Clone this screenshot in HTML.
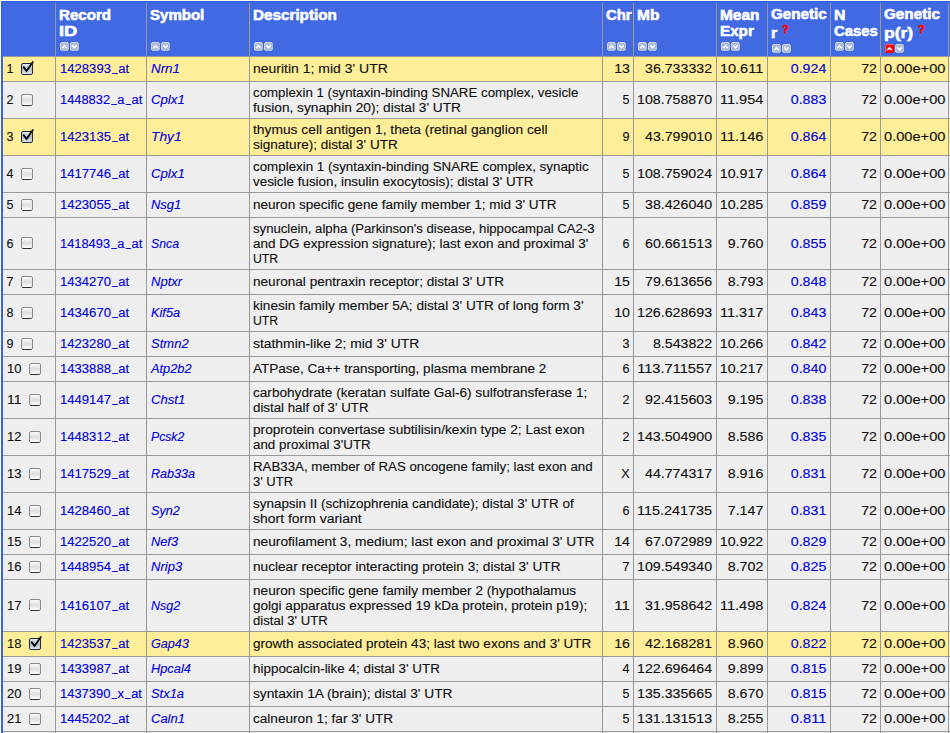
<!DOCTYPE html>
<html><head><meta charset="utf-8"><style>
html,body{margin:0;padding:0}
body{width:950px;height:733px;overflow:hidden;position:relative;background:#fdfcf0;font-family:"Liberation Sans",sans-serif}
.a{position:absolute}
.b{position:absolute;transform-origin:0 0;white-space:pre;font-size:12.5px;line-height:15px;color:#111;-webkit-text-stroke:0.12px currentColor}
.l{color:#0000dd}
.i{font-style:italic}
.u{display:inline-block;transform:translateY(-2.5px) scaleX(0.72)}
.h{position:absolute;transform-origin:0 0;white-space:pre;font-size:14px;font-weight:bold;line-height:16px;color:#fff;-webkit-text-stroke:0.55px #fff}
.q{position:absolute;font-size:11px;font-weight:bold;color:#f00;line-height:12px;-webkit-text-stroke:0.55px #f00;transform:scaleX(1.0);transform-origin:0 0}
</style></head><body>
<div class="a" style="left:1px;top:1px;width:949px;height:2px;background:#3a64e0"></div>
<div class="a" style="left:1px;top:1px;width:2px;height:732px;background:#3a64e0"></div>
<div class="a" style="left:3px;top:3px;width:947px;height:53px;background:#4169e1"></div>
<div class="a" style="left:3px;top:57px;width:947px;height:24px;background:#ffee99"></div>
<div class="a" style="left:3px;top:82px;width:947px;height:36px;background:#eeeeee"></div>
<div class="a" style="left:3px;top:119px;width:947px;height:36px;background:#ffee99"></div>
<div class="a" style="left:3px;top:156px;width:947px;height:36px;background:#eeeeee"></div>
<div class="a" style="left:3px;top:193px;width:947px;height:24px;background:#eeeeee"></div>
<div class="a" style="left:3px;top:218px;width:947px;height:51px;background:#eeeeee"></div>
<div class="a" style="left:3px;top:270px;width:947px;height:24px;background:#eeeeee"></div>
<div class="a" style="left:3px;top:295px;width:947px;height:36px;background:#eeeeee"></div>
<div class="a" style="left:3px;top:332px;width:947px;height:24px;background:#eeeeee"></div>
<div class="a" style="left:3px;top:357px;width:947px;height:24px;background:#eeeeee"></div>
<div class="a" style="left:3px;top:382px;width:947px;height:36px;background:#eeeeee"></div>
<div class="a" style="left:3px;top:419px;width:947px;height:36px;background:#eeeeee"></div>
<div class="a" style="left:3px;top:456px;width:947px;height:36px;background:#eeeeee"></div>
<div class="a" style="left:3px;top:493px;width:947px;height:36px;background:#eeeeee"></div>
<div class="a" style="left:3px;top:530px;width:947px;height:24px;background:#eeeeee"></div>
<div class="a" style="left:3px;top:555px;width:947px;height:24px;background:#eeeeee"></div>
<div class="a" style="left:3px;top:580px;width:947px;height:51px;background:#eeeeee"></div>
<div class="a" style="left:3px;top:632px;width:947px;height:24px;background:#ffee99"></div>
<div class="a" style="left:3px;top:657px;width:947px;height:24px;background:#eeeeee"></div>
<div class="a" style="left:3px;top:682px;width:947px;height:24px;background:#eeeeee"></div>
<div class="a" style="left:3px;top:707px;width:947px;height:24px;background:#eeeeee"></div>
<div class="a" style="left:3px;top:732px;width:947px;height:1px;background:#eeeeee"></div>
<div class="a" style="left:3px;top:56px;width:947px;height:1px;background:#999999"></div>
<div class="a" style="left:3px;top:81px;width:947px;height:1px;background:#999999"></div>
<div class="a" style="left:3px;top:118px;width:947px;height:1px;background:#999999"></div>
<div class="a" style="left:3px;top:155px;width:947px;height:1px;background:#999999"></div>
<div class="a" style="left:3px;top:192px;width:947px;height:1px;background:#999999"></div>
<div class="a" style="left:3px;top:217px;width:947px;height:1px;background:#999999"></div>
<div class="a" style="left:3px;top:269px;width:947px;height:1px;background:#999999"></div>
<div class="a" style="left:3px;top:294px;width:947px;height:1px;background:#999999"></div>
<div class="a" style="left:3px;top:331px;width:947px;height:1px;background:#999999"></div>
<div class="a" style="left:3px;top:356px;width:947px;height:1px;background:#999999"></div>
<div class="a" style="left:3px;top:381px;width:947px;height:1px;background:#999999"></div>
<div class="a" style="left:3px;top:418px;width:947px;height:1px;background:#999999"></div>
<div class="a" style="left:3px;top:455px;width:947px;height:1px;background:#999999"></div>
<div class="a" style="left:3px;top:492px;width:947px;height:1px;background:#999999"></div>
<div class="a" style="left:3px;top:529px;width:947px;height:1px;background:#999999"></div>
<div class="a" style="left:3px;top:554px;width:947px;height:1px;background:#999999"></div>
<div class="a" style="left:3px;top:579px;width:947px;height:1px;background:#999999"></div>
<div class="a" style="left:3px;top:631px;width:947px;height:1px;background:#999999"></div>
<div class="a" style="left:3px;top:656px;width:947px;height:1px;background:#999999"></div>
<div class="a" style="left:3px;top:681px;width:947px;height:1px;background:#999999"></div>
<div class="a" style="left:3px;top:706px;width:947px;height:1px;background:#999999"></div>
<div class="a" style="left:3px;top:731px;width:947px;height:1px;background:#999999"></div>
<div class="a" style="left:55px;top:3px;width:1px;height:730px;background:#999999"></div>
<div class="a" style="left:146px;top:3px;width:1px;height:730px;background:#999999"></div>
<div class="a" style="left:249px;top:3px;width:1px;height:730px;background:#999999"></div>
<div class="a" style="left:602px;top:3px;width:1px;height:730px;background:#999999"></div>
<div class="a" style="left:633px;top:3px;width:1px;height:730px;background:#999999"></div>
<div class="a" style="left:716px;top:3px;width:1px;height:730px;background:#999999"></div>
<div class="a" style="left:767px;top:3px;width:1px;height:730px;background:#999999"></div>
<div class="a" style="left:830px;top:3px;width:1px;height:730px;background:#999999"></div>
<div class="a" style="left:880px;top:3px;width:1px;height:730px;background:#999999"></div>
<div class="a" style="left:948px;top:3px;width:1px;height:730px;background:#999999"></div>
<div class="h" style="left:59px;top:7px;transform:scaleX(1.0788)">Record</div>
<div class="h" style="left:59px;top:23px;transform:scaleX(1.3092)">ID</div>
<svg class="a" style="left:60px;top:42px" width="19" height="9" viewBox="0 0 19 9"><path d="M1 0h7v1h1v7h-1v1h-7v-1h-1v-7h1z" fill="#aebbd9"/><path d="M11 0h7v1h1v7h-1v1h-7v-1h-1v-7h1z" fill="#aebbd9"/><path d="M1 0h7v1h-7zM0 1h1v7h-1zM11 0h7v1h-7zM10 1h1v7h-1z" fill="#fff" fill-opacity="0.35"/><path d="M2.2 6.3L4.5 3.8L6.8 6.3" stroke="#fff" stroke-width="1.4" fill="none"/><path d="M12.2 3.3L14.5 5.8L16.8 3.3" stroke="#fff" stroke-width="1.4" fill="none"/></svg>
<div class="h" style="left:150px;top:7px;transform:scaleX(1.0738)">Symbol</div>
<svg class="a" style="left:151px;top:42px" width="19" height="9" viewBox="0 0 19 9"><path d="M1 0h7v1h1v7h-1v1h-7v-1h-1v-7h1z" fill="#aebbd9"/><path d="M11 0h7v1h1v7h-1v1h-7v-1h-1v-7h1z" fill="#aebbd9"/><path d="M1 0h7v1h-7zM0 1h1v7h-1zM11 0h7v1h-7zM10 1h1v7h-1z" fill="#fff" fill-opacity="0.35"/><path d="M2.2 6.3L4.5 3.8L6.8 6.3" stroke="#fff" stroke-width="1.4" fill="none"/><path d="M12.2 3.3L14.5 5.8L16.8 3.3" stroke="#fff" stroke-width="1.4" fill="none"/></svg>
<div class="h" style="left:253px;top:7px;transform:scaleX(1.0892)">Description</div>
<svg class="a" style="left:254px;top:42px" width="19" height="9" viewBox="0 0 19 9"><path d="M1 0h7v1h1v7h-1v1h-7v-1h-1v-7h1z" fill="#aebbd9"/><path d="M11 0h7v1h1v7h-1v1h-7v-1h-1v-7h1z" fill="#aebbd9"/><path d="M1 0h7v1h-7zM0 1h1v7h-1zM11 0h7v1h-7zM10 1h1v7h-1z" fill="#fff" fill-opacity="0.35"/><path d="M2.2 6.3L4.5 3.8L6.8 6.3" stroke="#fff" stroke-width="1.4" fill="none"/><path d="M12.2 3.3L14.5 5.8L16.8 3.3" stroke="#fff" stroke-width="1.4" fill="none"/></svg>
<div class="h" style="left:606px;top:7px;transform:scaleX(1.0632)">Chr</div>
<svg class="a" style="left:607px;top:42px" width="19" height="9" viewBox="0 0 19 9"><path d="M1 0h7v1h1v7h-1v1h-7v-1h-1v-7h1z" fill="#aebbd9"/><path d="M11 0h7v1h1v7h-1v1h-7v-1h-1v-7h1z" fill="#aebbd9"/><path d="M1 0h7v1h-7zM0 1h1v7h-1zM11 0h7v1h-7zM10 1h1v7h-1z" fill="#fff" fill-opacity="0.35"/><path d="M2.2 6.3L4.5 3.8L6.8 6.3" stroke="#fff" stroke-width="1.4" fill="none"/><path d="M12.2 3.3L14.5 5.8L16.8 3.3" stroke="#fff" stroke-width="1.4" fill="none"/></svg>
<div class="h" style="left:637px;top:7px;transform:scaleX(1.1045)">Mb</div>
<svg class="a" style="left:638px;top:42px" width="19" height="9" viewBox="0 0 19 9"><path d="M1 0h7v1h1v7h-1v1h-7v-1h-1v-7h1z" fill="#aebbd9"/><path d="M11 0h7v1h1v7h-1v1h-7v-1h-1v-7h1z" fill="#aebbd9"/><path d="M1 0h7v1h-7zM0 1h1v7h-1zM11 0h7v1h-7zM10 1h1v7h-1z" fill="#fff" fill-opacity="0.35"/><path d="M2.2 6.3L4.5 3.8L6.8 6.3" stroke="#fff" stroke-width="1.4" fill="none"/><path d="M12.2 3.3L14.5 5.8L16.8 3.3" stroke="#fff" stroke-width="1.4" fill="none"/></svg>
<div class="h" style="left:720px;top:7px;transform:scaleX(1.0991)">Mean</div>
<div class="h" style="left:720px;top:23px;transform:scaleX(1.0871)">Expr</div>
<svg class="a" style="left:721px;top:42px" width="19" height="9" viewBox="0 0 19 9"><path d="M1 0h7v1h1v7h-1v1h-7v-1h-1v-7h1z" fill="#aebbd9"/><path d="M11 0h7v1h1v7h-1v1h-7v-1h-1v-7h1z" fill="#aebbd9"/><path d="M1 0h7v1h-7zM0 1h1v7h-1zM11 0h7v1h-7zM10 1h1v7h-1z" fill="#fff" fill-opacity="0.35"/><path d="M2.2 6.3L4.5 3.8L6.8 6.3" stroke="#fff" stroke-width="1.4" fill="none"/><path d="M12.2 3.3L14.5 5.8L16.8 3.3" stroke="#fff" stroke-width="1.4" fill="none"/></svg>
<div class="h" style="left:771px;top:6px;transform:scaleX(1.0826)">Genetic</div>
<div class="h" style="left:771px;top:25px;transform:scaleX(1.1276)">r</div>
<svg class="a" style="left:772px;top:44px" width="19" height="9" viewBox="0 0 19 9"><path d="M1 0h7v1h1v7h-1v1h-7v-1h-1v-7h1z" fill="#aebbd9"/><path d="M11 0h7v1h1v7h-1v1h-7v-1h-1v-7h1z" fill="#aebbd9"/><path d="M1 0h7v1h-7zM0 1h1v7h-1zM11 0h7v1h-7zM10 1h1v7h-1z" fill="#fff" fill-opacity="0.35"/><path d="M2.2 6.3L4.5 3.8L6.8 6.3" stroke="#fff" stroke-width="1.4" fill="none"/><path d="M12.2 3.3L14.5 5.8L16.8 3.3" stroke="#fff" stroke-width="1.4" fill="none"/></svg>
<div class="h" style="left:834px;top:7px;transform:scaleX(1.1318)">N</div>
<div class="h" style="left:834px;top:23px;transform:scaleX(1.0585)">Cases</div>
<svg class="a" style="left:835px;top:42px" width="19" height="9" viewBox="0 0 19 9"><path d="M1 0h7v1h1v7h-1v1h-7v-1h-1v-7h1z" fill="#aebbd9"/><path d="M11 0h7v1h1v7h-1v1h-7v-1h-1v-7h1z" fill="#aebbd9"/><path d="M1 0h7v1h-7zM0 1h1v7h-1zM11 0h7v1h-7zM10 1h1v7h-1z" fill="#fff" fill-opacity="0.35"/><path d="M2.2 6.3L4.5 3.8L6.8 6.3" stroke="#fff" stroke-width="1.4" fill="none"/><path d="M12.2 3.3L14.5 5.8L16.8 3.3" stroke="#fff" stroke-width="1.4" fill="none"/></svg>
<div class="h" style="left:884px;top:6px;transform:scaleX(1.0897)">Genetic</div>
<div class="h" style="left:884px;top:25px;transform:scaleX(1.2523)">p(r)</div>
<svg class="a" style="left:885px;top:44px" width="19" height="9" viewBox="0 0 19 9"><path d="M1 0h7v1h1v7h-1v1h-7v-1h-1v-7h1z" fill="#ff0000"/><path d="M11 0h7v1h1v7h-1v1h-7v-1h-1v-7h1z" fill="#aebbd9"/><path d="M1 0h7v1h-7zM0 1h1v7h-1zM11 0h7v1h-7zM10 1h1v7h-1z" fill="#fff" fill-opacity="0.35"/><path d="M2.2 6.3L4.5 3.8L6.8 6.3" stroke="#fff" stroke-width="1.4" fill="none"/><path d="M12.2 3.3L14.5 5.8L16.8 3.3" stroke="#fff" stroke-width="1.4" fill="none"/></svg>
<div class="q" style="left:782px;top:22.5px">?</div>
<div class="q" style="left:918px;top:22.5px">?</div>
<svg width="0" height="0" style="position:absolute"><defs><linearGradient id="gc" x1="0" y1="0" x2="0" y2="1"><stop offset="0" stop-color="#e6edf4"/><stop offset="0.5" stop-color="#aebdcc"/><stop offset="1" stop-color="#e2eaf2"/></linearGradient><linearGradient id="gu" x1="0" y1="0" x2="0" y2="1"><stop offset="0" stop-color="#ffffff"/><stop offset="0.5" stop-color="#dcdcdc"/><stop offset="1" stop-color="#ffffff"/></linearGradient></defs></svg>
<div class="b" style="left:6.5px;top:62px">1</div>
<svg class="a" style="left:21px;top:61px" width="14" height="14" viewBox="0 0 14 14"><rect x="0.5" y="2.5" width="11" height="11" rx="1.5" fill="url(#gc)" stroke="#1e2b40"/><path d="M2.2 5.6L5.6 10L12.2 0.5" stroke="#000" stroke-width="1.8" fill="none"/></svg>
<div class="b l" style="left:60px;top:62px;transform:scaleX(1.0473)">1428393<span class="u">_</span>at</div>
<div class="b l i" style="left:151px;top:62px;transform:scaleX(1.0705)">Nrn1</div>
<div class="b" style="left:253px;top:62px;transform:scaleX(1.1194)">neuritin 1; mid 3' UTR</div>
<div class="b" style="right:320.5px;top:62px;transform:scaleX(1.1327);transform-origin:100% 0">13</div>
<div class="b" style="right:237.5px;top:62px;transform:scaleX(1.1357);transform-origin:100% 0">36.733332</div>
<div class="b" style="right:186.5px;top:62px;transform:scaleX(1.1634);transform-origin:100% 0">10.611</div>
<div class="b l" style="right:123.5px;top:62px;transform:scaleX(1.1349);transform-origin:100% 0">0.924</div>
<div class="b" style="right:73.5px;top:62px;transform:scaleX(1.1327);transform-origin:100% 0">72</div>
<div class="b" style="left:884px;top:62px;transform:scaleX(1.1708)">0.00e+00</div>
<div class="b" style="left:6.5px;top:93px">2</div>
<svg class="a" style="left:21px;top:94px" width="12" height="12" viewBox="0 0 12 12"><rect x="0.5" y="0.5" width="11" height="11" rx="1.5" fill="url(#gu)" stroke="#8a8a8a"/><path d="M1.5 11.5h9" stroke="#333" stroke-width="1"/></svg>
<div class="b l" style="left:60px;top:93px;transform:scaleX(1.0281)">1448832<span class="u">_</span>a<span class="u">_</span>at</div>
<div class="b l i" style="left:151px;top:93px;transform:scaleX(1.0548)">Cplx1</div>
<div class="b" style="left:253px;top:85.5px;transform:scaleX(1.0620)">complexin 1 (syntaxin-binding SNARE complex, vesicle</div>
<div class="b" style="left:253px;top:100.5px;transform:scaleX(1.0944)">fusion, synaphin 20); distal 3' UTR</div>
<div class="b" style="right:320.5px;top:93px">5</div>
<div class="b" style="right:237.5px;top:93px;transform:scaleX(1.1358);transform-origin:100% 0">108.758870</div>
<div class="b" style="right:186.5px;top:93px;transform:scaleX(1.1634);transform-origin:100% 0">11.954</div>
<div class="b l" style="right:123.5px;top:93px;transform:scaleX(1.1349);transform-origin:100% 0">0.883</div>
<div class="b" style="right:73.5px;top:93px;transform:scaleX(1.1327);transform-origin:100% 0">72</div>
<div class="b" style="left:884px;top:93px;transform:scaleX(1.1708)">0.00e+00</div>
<div class="b" style="left:6.5px;top:130px">3</div>
<svg class="a" style="left:21px;top:129px" width="14" height="14" viewBox="0 0 14 14"><rect x="0.5" y="2.5" width="11" height="11" rx="1.5" fill="url(#gc)" stroke="#1e2b40"/><path d="M2.2 5.6L5.6 10L12.2 0.5" stroke="#000" stroke-width="1.8" fill="none"/></svg>
<div class="b l" style="left:60px;top:130px;transform:scaleX(1.0473)">1423135<span class="u">_</span>at</div>
<div class="b l i" style="left:151px;top:130px;transform:scaleX(1.1025)">Thy1</div>
<div class="b" style="left:253px;top:122.5px;transform:scaleX(1.1042)">thymus cell antigen 1, theta (retinal ganglion cell</div>
<div class="b" style="left:253px;top:137.5px;transform:scaleX(1.0830)">signature); distal 3' UTR</div>
<div class="b" style="right:320.5px;top:130px">9</div>
<div class="b" style="right:237.5px;top:130px;transform:scaleX(1.1357);transform-origin:100% 0">43.799010</div>
<div class="b" style="right:186.5px;top:130px;transform:scaleX(1.1634);transform-origin:100% 0">11.146</div>
<div class="b l" style="right:123.5px;top:130px;transform:scaleX(1.1349);transform-origin:100% 0">0.864</div>
<div class="b" style="right:73.5px;top:130px;transform:scaleX(1.1327);transform-origin:100% 0">72</div>
<div class="b" style="left:884px;top:130px;transform:scaleX(1.1708)">0.00e+00</div>
<div class="b" style="left:6.5px;top:167px">4</div>
<svg class="a" style="left:21px;top:168px" width="12" height="12" viewBox="0 0 12 12"><rect x="0.5" y="0.5" width="11" height="11" rx="1.5" fill="url(#gu)" stroke="#8a8a8a"/><path d="M1.5 11.5h9" stroke="#333" stroke-width="1"/></svg>
<div class="b l" style="left:60px;top:167px;transform:scaleX(1.0473)">1417746<span class="u">_</span>at</div>
<div class="b l i" style="left:151px;top:167px;transform:scaleX(1.0548)">Cplx1</div>
<div class="b" style="left:253px;top:159.5px;transform:scaleX(1.0688)">complexin 1 (syntaxin-binding SNARE complex, synaptic</div>
<div class="b" style="left:253px;top:174.5px;transform:scaleX(1.0725)">vesicle fusion, insulin exocytosis); distal 3' UTR</div>
<div class="b" style="right:320.5px;top:167px">5</div>
<div class="b" style="right:237.5px;top:167px;transform:scaleX(1.1358);transform-origin:100% 0">108.759024</div>
<div class="b" style="right:186.5px;top:167px;transform:scaleX(1.1352);transform-origin:100% 0">10.917</div>
<div class="b l" style="right:123.5px;top:167px;transform:scaleX(1.1349);transform-origin:100% 0">0.864</div>
<div class="b" style="right:73.5px;top:167px;transform:scaleX(1.1327);transform-origin:100% 0">72</div>
<div class="b" style="left:884px;top:167px;transform:scaleX(1.1708)">0.00e+00</div>
<div class="b" style="left:6.5px;top:198px">5</div>
<svg class="a" style="left:21px;top:199px" width="12" height="12" viewBox="0 0 12 12"><rect x="0.5" y="0.5" width="11" height="11" rx="1.5" fill="url(#gu)" stroke="#8a8a8a"/><path d="M1.5 11.5h9" stroke="#333" stroke-width="1"/></svg>
<div class="b l" style="left:60px;top:198px;transform:scaleX(1.0473)">1423055<span class="u">_</span>at</div>
<div class="b l i" style="left:151px;top:198px;transform:scaleX(1.0366)">Nsg1</div>
<div class="b" style="left:253px;top:198px;transform:scaleX(1.0832)">neuron specific gene family member 1; mid 3' UTR</div>
<div class="b" style="right:320.5px;top:198px">5</div>
<div class="b" style="right:237.5px;top:198px;transform:scaleX(1.1357);transform-origin:100% 0">38.426040</div>
<div class="b" style="right:186.5px;top:198px;transform:scaleX(1.1352);transform-origin:100% 0">10.285</div>
<div class="b l" style="right:123.5px;top:198px;transform:scaleX(1.1349);transform-origin:100% 0">0.859</div>
<div class="b" style="right:73.5px;top:198px;transform:scaleX(1.1327);transform-origin:100% 0">72</div>
<div class="b" style="left:884px;top:198px;transform:scaleX(1.1708)">0.00e+00</div>
<div class="b" style="left:6.5px;top:236.5px">6</div>
<svg class="a" style="left:21px;top:237px" width="12" height="12" viewBox="0 0 12 12"><rect x="0.5" y="0.5" width="11" height="11" rx="1.5" fill="url(#gu)" stroke="#8a8a8a"/><path d="M1.5 11.5h9" stroke="#333" stroke-width="1"/></svg>
<div class="b l" style="left:60px;top:236.5px;transform:scaleX(1.0281)">1418493<span class="u">_</span>a<span class="u">_</span>at</div>
<div class="b l i" style="left:151px;top:236.5px;transform:scaleX(0.9813)">Snca</div>
<div class="b" style="left:253px;top:221.5px;transform:scaleX(1.0515)">synuclein, alpha (Parkinson's disease, hippocampal CA2-3</div>
<div class="b" style="left:253px;top:236.5px;transform:scaleX(1.0783)">and DG expression signature); last exon and proximal 3'</div>
<div class="b" style="left:253px;top:251.5px;transform:scaleX(0.9816)">UTR</div>
<div class="b" style="right:320.5px;top:236.5px">6</div>
<div class="b" style="right:237.5px;top:236.5px;transform:scaleX(1.1357);transform-origin:100% 0">60.661513</div>
<div class="b" style="right:186.5px;top:236.5px;transform:scaleX(1.1349);transform-origin:100% 0">9.760</div>
<div class="b l" style="right:123.5px;top:236.5px;transform:scaleX(1.1349);transform-origin:100% 0">0.855</div>
<div class="b" style="right:73.5px;top:236.5px;transform:scaleX(1.1327);transform-origin:100% 0">72</div>
<div class="b" style="left:884px;top:236.5px;transform:scaleX(1.1708)">0.00e+00</div>
<div class="b" style="left:6.5px;top:275px">7</div>
<svg class="a" style="left:21px;top:276px" width="12" height="12" viewBox="0 0 12 12"><rect x="0.5" y="0.5" width="11" height="11" rx="1.5" fill="url(#gu)" stroke="#8a8a8a"/><path d="M1.5 11.5h9" stroke="#333" stroke-width="1"/></svg>
<div class="b l" style="left:60px;top:275px;transform:scaleX(1.0473)">1434270<span class="u">_</span>at</div>
<div class="b l i" style="left:151px;top:275px;transform:scaleX(1.0423)">Nptxr</div>
<div class="b" style="left:253px;top:275px;transform:scaleX(1.0868)">neuronal pentraxin receptor; distal 3' UTR</div>
<div class="b" style="right:320.5px;top:275px;transform:scaleX(1.1327);transform-origin:100% 0">15</div>
<div class="b" style="right:237.5px;top:275px;transform:scaleX(1.1357);transform-origin:100% 0">79.613656</div>
<div class="b" style="right:186.5px;top:275px;transform:scaleX(1.1349);transform-origin:100% 0">8.793</div>
<div class="b l" style="right:123.5px;top:275px;transform:scaleX(1.1349);transform-origin:100% 0">0.848</div>
<div class="b" style="right:73.5px;top:275px;transform:scaleX(1.1327);transform-origin:100% 0">72</div>
<div class="b" style="left:884px;top:275px;transform:scaleX(1.1708)">0.00e+00</div>
<div class="b" style="left:6.5px;top:306px">8</div>
<svg class="a" style="left:21px;top:307px" width="12" height="12" viewBox="0 0 12 12"><rect x="0.5" y="0.5" width="11" height="11" rx="1.5" fill="url(#gu)" stroke="#8a8a8a"/><path d="M1.5 11.5h9" stroke="#333" stroke-width="1"/></svg>
<div class="b l" style="left:60px;top:306px;transform:scaleX(1.0473)">1434670<span class="u">_</span>at</div>
<div class="b l i" style="left:151px;top:306px;transform:scaleX(1.0231)">Kif5a</div>
<div class="b" style="left:253px;top:298.5px;transform:scaleX(1.0891)">kinesin family member 5A; distal 3' UTR of long form 3'</div>
<div class="b" style="left:253px;top:313.5px;transform:scaleX(0.9816)">UTR</div>
<div class="b" style="right:320.5px;top:306px;transform:scaleX(1.1327);transform-origin:100% 0">10</div>
<div class="b" style="right:237.5px;top:306px;transform:scaleX(1.1358);transform-origin:100% 0">126.628693</div>
<div class="b" style="right:186.5px;top:306px;transform:scaleX(1.1634);transform-origin:100% 0">11.317</div>
<div class="b l" style="right:123.5px;top:306px;transform:scaleX(1.1349);transform-origin:100% 0">0.843</div>
<div class="b" style="right:73.5px;top:306px;transform:scaleX(1.1327);transform-origin:100% 0">72</div>
<div class="b" style="left:884px;top:306px;transform:scaleX(1.1708)">0.00e+00</div>
<div class="b" style="left:6.5px;top:337px">9</div>
<svg class="a" style="left:21px;top:338px" width="12" height="12" viewBox="0 0 12 12"><rect x="0.5" y="0.5" width="11" height="11" rx="1.5" fill="url(#gu)" stroke="#8a8a8a"/><path d="M1.5 11.5h9" stroke="#333" stroke-width="1"/></svg>
<div class="b l" style="left:60px;top:337px;transform:scaleX(1.0473)">1423280<span class="u">_</span>at</div>
<div class="b l i" style="left:151px;top:337px;transform:scaleX(1.0417)">Stmn2</div>
<div class="b" style="left:253px;top:337px;transform:scaleX(1.1104)">stathmin-like 2; mid 3' UTR</div>
<div class="b" style="right:320.5px;top:337px">3</div>
<div class="b" style="right:237.5px;top:337px;transform:scaleX(1.1356);transform-origin:100% 0">8.543822</div>
<div class="b" style="right:186.5px;top:337px;transform:scaleX(1.1352);transform-origin:100% 0">10.266</div>
<div class="b l" style="right:123.5px;top:337px;transform:scaleX(1.1349);transform-origin:100% 0">0.842</div>
<div class="b" style="right:73.5px;top:337px;transform:scaleX(1.1327);transform-origin:100% 0">72</div>
<div class="b" style="left:884px;top:337px;transform:scaleX(1.1708)">0.00e+00</div>
<div class="b" style="left:6.5px;top:362px;transform:scaleX(1.0397)">10</div>
<svg class="a" style="left:29px;top:363px" width="12" height="12" viewBox="0 0 12 12"><rect x="0.5" y="0.5" width="11" height="11" rx="1.5" fill="url(#gu)" stroke="#8a8a8a"/><path d="M1.5 11.5h9" stroke="#333" stroke-width="1"/></svg>
<div class="b l" style="left:60px;top:362px;transform:scaleX(1.0473)">1433888<span class="u">_</span>at</div>
<div class="b l i" style="left:151px;top:362px;transform:scaleX(1.0250)">Atp2b2</div>
<div class="b" style="left:253px;top:362px;transform:scaleX(1.0802)">ATPase, Ca++ transporting, plasma membrane 2</div>
<div class="b" style="right:320.5px;top:362px">6</div>
<div class="b" style="right:237.5px;top:362px;transform:scaleX(1.1687);transform-origin:100% 0">113.711557</div>
<div class="b" style="right:186.5px;top:362px;transform:scaleX(1.1352);transform-origin:100% 0">10.217</div>
<div class="b l" style="right:123.5px;top:362px;transform:scaleX(1.1349);transform-origin:100% 0">0.840</div>
<div class="b" style="right:73.5px;top:362px;transform:scaleX(1.1327);transform-origin:100% 0">72</div>
<div class="b" style="left:884px;top:362px;transform:scaleX(1.1708)">0.00e+00</div>
<div class="b" style="left:6.5px;top:393px;transform:scaleX(1.1138)">11</div>
<svg class="a" style="left:29px;top:394px" width="12" height="12" viewBox="0 0 12 12"><rect x="0.5" y="0.5" width="11" height="11" rx="1.5" fill="url(#gu)" stroke="#8a8a8a"/><path d="M1.5 11.5h9" stroke="#333" stroke-width="1"/></svg>
<div class="b l" style="left:60px;top:393px;transform:scaleX(1.0473)">1449147<span class="u">_</span>at</div>
<div class="b l i" style="left:151px;top:393px;transform:scaleX(1.0470)">Chst1</div>
<div class="b" style="left:253px;top:385.5px;transform:scaleX(1.0885)">carbohydrate (keratan sulfate Gal-6) sulfotransferase 1;</div>
<div class="b" style="left:253px;top:400.5px;transform:scaleX(1.0633)">distal half of 3' UTR</div>
<div class="b" style="right:320.5px;top:393px">2</div>
<div class="b" style="right:237.5px;top:393px;transform:scaleX(1.1357);transform-origin:100% 0">92.415603</div>
<div class="b" style="right:186.5px;top:393px;transform:scaleX(1.1349);transform-origin:100% 0">9.195</div>
<div class="b l" style="right:123.5px;top:393px;transform:scaleX(1.1349);transform-origin:100% 0">0.838</div>
<div class="b" style="right:73.5px;top:393px;transform:scaleX(1.1327);transform-origin:100% 0">72</div>
<div class="b" style="left:884px;top:393px;transform:scaleX(1.1708)">0.00e+00</div>
<div class="b" style="left:6.5px;top:430px;transform:scaleX(1.0397)">12</div>
<svg class="a" style="left:29px;top:431px" width="12" height="12" viewBox="0 0 12 12"><rect x="0.5" y="0.5" width="11" height="11" rx="1.5" fill="url(#gu)" stroke="#8a8a8a"/><path d="M1.5 11.5h9" stroke="#333" stroke-width="1"/></svg>
<div class="b l" style="left:60px;top:430px;transform:scaleX(1.0473)">1448312<span class="u">_</span>at</div>
<div class="b l i" style="left:151px;top:430px;transform:scaleX(0.9764)">Pcsk2</div>
<div class="b" style="left:253px;top:422.5px;transform:scaleX(1.0920)">proprotein convertase subtilisin/kexin type 2; Last exon</div>
<div class="b" style="left:253px;top:437.5px;transform:scaleX(1.0695)">and proximal 3'UTR</div>
<div class="b" style="right:320.5px;top:430px">2</div>
<div class="b" style="right:237.5px;top:430px;transform:scaleX(1.1358);transform-origin:100% 0">143.504900</div>
<div class="b" style="right:186.5px;top:430px;transform:scaleX(1.1349);transform-origin:100% 0">8.586</div>
<div class="b l" style="right:123.5px;top:430px;transform:scaleX(1.1349);transform-origin:100% 0">0.835</div>
<div class="b" style="right:73.5px;top:430px;transform:scaleX(1.1327);transform-origin:100% 0">72</div>
<div class="b" style="left:884px;top:430px;transform:scaleX(1.1708)">0.00e+00</div>
<div class="b" style="left:6.5px;top:467px;transform:scaleX(1.0397)">13</div>
<svg class="a" style="left:29px;top:468px" width="12" height="12" viewBox="0 0 12 12"><rect x="0.5" y="0.5" width="11" height="11" rx="1.5" fill="url(#gu)" stroke="#8a8a8a"/><path d="M1.5 11.5h9" stroke="#333" stroke-width="1"/></svg>
<div class="b l" style="left:60px;top:467px;transform:scaleX(1.0473)">1417529<span class="u">_</span>at</div>
<div class="b l i" style="left:151px;top:467px;transform:scaleX(1.0059)">Rab33a</div>
<div class="b" style="left:253px;top:459.5px;transform:scaleX(1.0625)">RAB33A, member of RAS oncogene family; last exon and</div>
<div class="b" style="left:253px;top:474.5px;transform:scaleX(1.0404)">3' UTR</div>
<div class="b" style="right:320.5px;top:467px">X</div>
<div class="b" style="right:237.5px;top:467px;transform:scaleX(1.1357);transform-origin:100% 0">44.774317</div>
<div class="b" style="right:186.5px;top:467px;transform:scaleX(1.1349);transform-origin:100% 0">8.916</div>
<div class="b l" style="right:123.5px;top:467px;transform:scaleX(1.1349);transform-origin:100% 0">0.831</div>
<div class="b" style="right:73.5px;top:467px;transform:scaleX(1.1327);transform-origin:100% 0">72</div>
<div class="b" style="left:884px;top:467px;transform:scaleX(1.1708)">0.00e+00</div>
<div class="b" style="left:6.5px;top:504px;transform:scaleX(1.0397)">14</div>
<svg class="a" style="left:29px;top:505px" width="12" height="12" viewBox="0 0 12 12"><rect x="0.5" y="0.5" width="11" height="11" rx="1.5" fill="url(#gu)" stroke="#8a8a8a"/><path d="M1.5 11.5h9" stroke="#333" stroke-width="1"/></svg>
<div class="b l" style="left:60px;top:504px;transform:scaleX(1.0473)">1428460<span class="u">_</span>at</div>
<div class="b l i" style="left:151px;top:504px;transform:scaleX(1.0078)">Syn2</div>
<div class="b" style="left:253px;top:496.5px;transform:scaleX(1.0747)">synapsin II (schizophrenia candidate); distal 3' UTR of</div>
<div class="b" style="left:253px;top:511.5px;transform:scaleX(1.1158)">short form variant</div>
<div class="b" style="right:320.5px;top:504px">6</div>
<div class="b" style="right:237.5px;top:504px;transform:scaleX(1.1520);transform-origin:100% 0">115.241735</div>
<div class="b" style="right:186.5px;top:504px;transform:scaleX(1.1349);transform-origin:100% 0">7.147</div>
<div class="b l" style="right:123.5px;top:504px;transform:scaleX(1.1349);transform-origin:100% 0">0.831</div>
<div class="b" style="right:73.5px;top:504px;transform:scaleX(1.1327);transform-origin:100% 0">72</div>
<div class="b" style="left:884px;top:504px;transform:scaleX(1.1708)">0.00e+00</div>
<div class="b" style="left:6.5px;top:535px;transform:scaleX(1.0397)">15</div>
<svg class="a" style="left:29px;top:536px" width="12" height="12" viewBox="0 0 12 12"><rect x="0.5" y="0.5" width="11" height="11" rx="1.5" fill="url(#gu)" stroke="#8a8a8a"/><path d="M1.5 11.5h9" stroke="#333" stroke-width="1"/></svg>
<div class="b l" style="left:60px;top:535px;transform:scaleX(1.0473)">1422520<span class="u">_</span>at</div>
<div class="b l i" style="left:151px;top:535px;transform:scaleX(1.0241)">Nef3</div>
<div class="b" style="left:253px;top:535px;transform:scaleX(1.0959)">neurofilament 3, medium; last exon and proximal 3' UTR</div>
<div class="b" style="right:320.5px;top:535px;transform:scaleX(1.1327);transform-origin:100% 0">14</div>
<div class="b" style="right:237.5px;top:535px;transform:scaleX(1.1357);transform-origin:100% 0">67.072989</div>
<div class="b" style="right:186.5px;top:535px;transform:scaleX(1.1352);transform-origin:100% 0">10.922</div>
<div class="b l" style="right:123.5px;top:535px;transform:scaleX(1.1349);transform-origin:100% 0">0.829</div>
<div class="b" style="right:73.5px;top:535px;transform:scaleX(1.1327);transform-origin:100% 0">72</div>
<div class="b" style="left:884px;top:535px;transform:scaleX(1.1708)">0.00e+00</div>
<div class="b" style="left:6.5px;top:560px;transform:scaleX(1.0397)">16</div>
<svg class="a" style="left:29px;top:561px" width="12" height="12" viewBox="0 0 12 12"><rect x="0.5" y="0.5" width="11" height="11" rx="1.5" fill="url(#gu)" stroke="#8a8a8a"/><path d="M1.5 11.5h9" stroke="#333" stroke-width="1"/></svg>
<div class="b l" style="left:60px;top:560px;transform:scaleX(1.0473)">1448954<span class="u">_</span>at</div>
<div class="b l i" style="left:151px;top:560px;transform:scaleX(1.0427)">Nrip3</div>
<div class="b" style="left:253px;top:560px;transform:scaleX(1.0917)">nuclear receptor interacting protein 3; distal 3' UTR</div>
<div class="b" style="right:320.5px;top:560px">7</div>
<div class="b" style="right:237.5px;top:560px;transform:scaleX(1.1358);transform-origin:100% 0">109.549340</div>
<div class="b" style="right:186.5px;top:560px;transform:scaleX(1.1349);transform-origin:100% 0">8.702</div>
<div class="b l" style="right:123.5px;top:560px;transform:scaleX(1.1349);transform-origin:100% 0">0.825</div>
<div class="b" style="right:73.5px;top:560px;transform:scaleX(1.1327);transform-origin:100% 0">72</div>
<div class="b" style="left:884px;top:560px;transform:scaleX(1.1708)">0.00e+00</div>
<div class="b" style="left:6.5px;top:598.5px;transform:scaleX(1.0397)">17</div>
<svg class="a" style="left:29px;top:599px" width="12" height="12" viewBox="0 0 12 12"><rect x="0.5" y="0.5" width="11" height="11" rx="1.5" fill="url(#gu)" stroke="#8a8a8a"/><path d="M1.5 11.5h9" stroke="#333" stroke-width="1"/></svg>
<div class="b l" style="left:60px;top:598.5px;transform:scaleX(1.0473)">1416107<span class="u">_</span>at</div>
<div class="b l i" style="left:151px;top:598.5px;transform:scaleX(1.0011)">Nsg2</div>
<div class="b" style="left:253px;top:583.5px;transform:scaleX(1.0890)">neuron specific gene family member 2 (hypothalamus</div>
<div class="b" style="left:253px;top:598.5px;transform:scaleX(1.0831)">golgi apparatus expressed 19 kDa protein, protein p19);</div>
<div class="b" style="left:253px;top:613.5px;transform:scaleX(1.0492)">distal 3' UTR</div>
<div class="b" style="right:320.5px;top:598.5px;transform:scaleX(1.2134);transform-origin:100% 0">11</div>
<div class="b" style="right:237.5px;top:598.5px;transform:scaleX(1.1357);transform-origin:100% 0">31.958642</div>
<div class="b" style="right:186.5px;top:598.5px;transform:scaleX(1.1634);transform-origin:100% 0">11.498</div>
<div class="b l" style="right:123.5px;top:598.5px;transform:scaleX(1.1349);transform-origin:100% 0">0.824</div>
<div class="b" style="right:73.5px;top:598.5px;transform:scaleX(1.1327);transform-origin:100% 0">72</div>
<div class="b" style="left:884px;top:598.5px;transform:scaleX(1.1708)">0.00e+00</div>
<div class="b" style="left:6.5px;top:637px;transform:scaleX(1.0397)">18</div>
<svg class="a" style="left:29px;top:636px" width="14" height="14" viewBox="0 0 14 14"><rect x="0.5" y="2.5" width="11" height="11" rx="1.5" fill="url(#gc)" stroke="#1e2b40"/><path d="M2.2 5.6L5.6 10L12.2 0.5" stroke="#000" stroke-width="1.8" fill="none"/></svg>
<div class="b l" style="left:60px;top:637px;transform:scaleX(1.0473)">1423537<span class="u">_</span>at</div>
<div class="b l i" style="left:151px;top:637px;transform:scaleX(1.0101)">Gap43</div>
<div class="b" style="left:253px;top:637px;transform:scaleX(1.0835)">growth associated protein 43; last two exons and 3' UTR</div>
<div class="b" style="right:320.5px;top:637px;transform:scaleX(1.1327);transform-origin:100% 0">16</div>
<div class="b" style="right:237.5px;top:637px;transform:scaleX(1.1357);transform-origin:100% 0">42.168281</div>
<div class="b" style="right:186.5px;top:637px;transform:scaleX(1.1349);transform-origin:100% 0">8.960</div>
<div class="b l" style="right:123.5px;top:637px;transform:scaleX(1.1349);transform-origin:100% 0">0.822</div>
<div class="b" style="right:73.5px;top:637px;transform:scaleX(1.1327);transform-origin:100% 0">72</div>
<div class="b" style="left:884px;top:637px;transform:scaleX(1.1708)">0.00e+00</div>
<div class="b" style="left:6.5px;top:662px;transform:scaleX(1.0397)">19</div>
<svg class="a" style="left:29px;top:663px" width="12" height="12" viewBox="0 0 12 12"><rect x="0.5" y="0.5" width="11" height="11" rx="1.5" fill="url(#gu)" stroke="#8a8a8a"/><path d="M1.5 11.5h9" stroke="#333" stroke-width="1"/></svg>
<div class="b l" style="left:60px;top:662px;transform:scaleX(1.0473)">1433987<span class="u">_</span>at</div>
<div class="b l i" style="left:151px;top:662px;transform:scaleX(1.0241)">Hpcal4</div>
<div class="b" style="left:253px;top:662px;transform:scaleX(1.0739)">hippocalcin-like 4; distal 3' UTR</div>
<div class="b" style="right:320.5px;top:662px">4</div>
<div class="b" style="right:237.5px;top:662px;transform:scaleX(1.1358);transform-origin:100% 0">122.696464</div>
<div class="b" style="right:186.5px;top:662px;transform:scaleX(1.1349);transform-origin:100% 0">9.899</div>
<div class="b l" style="right:123.5px;top:662px;transform:scaleX(1.1349);transform-origin:100% 0">0.815</div>
<div class="b" style="right:73.5px;top:662px;transform:scaleX(1.1327);transform-origin:100% 0">72</div>
<div class="b" style="left:884px;top:662px;transform:scaleX(1.1708)">0.00e+00</div>
<div class="b" style="left:6.5px;top:687px;transform:scaleX(1.0397)">20</div>
<svg class="a" style="left:29px;top:688px" width="12" height="12" viewBox="0 0 12 12"><rect x="0.5" y="0.5" width="11" height="11" rx="1.5" fill="url(#gu)" stroke="#8a8a8a"/><path d="M1.5 11.5h9" stroke="#333" stroke-width="1"/></svg>
<div class="b l" style="left:60px;top:687px;transform:scaleX(1.0341)">1437390<span class="u">_</span>x<span class="u">_</span>at</div>
<div class="b l i" style="left:151px;top:687px;transform:scaleX(1.0320)">Stx1a</div>
<div class="b" style="left:253px;top:687px;transform:scaleX(1.0985)">syntaxin 1A (brain); distal 3' UTR</div>
<div class="b" style="right:320.5px;top:687px">5</div>
<div class="b" style="right:237.5px;top:687px;transform:scaleX(1.1358);transform-origin:100% 0">135.335665</div>
<div class="b" style="right:186.5px;top:687px;transform:scaleX(1.1349);transform-origin:100% 0">8.670</div>
<div class="b l" style="right:123.5px;top:687px;transform:scaleX(1.1349);transform-origin:100% 0">0.815</div>
<div class="b" style="right:73.5px;top:687px;transform:scaleX(1.1327);transform-origin:100% 0">72</div>
<div class="b" style="left:884px;top:687px;transform:scaleX(1.1708)">0.00e+00</div>
<div class="b" style="left:6.5px;top:712px;transform:scaleX(1.0397)">21</div>
<svg class="a" style="left:29px;top:713px" width="12" height="12" viewBox="0 0 12 12"><rect x="0.5" y="0.5" width="11" height="11" rx="1.5" fill="url(#gu)" stroke="#8a8a8a"/><path d="M1.5 11.5h9" stroke="#333" stroke-width="1"/></svg>
<div class="b l" style="left:60px;top:712px;transform:scaleX(1.0473)">1445202<span class="u">_</span>at</div>
<div class="b l i" style="left:151px;top:712px;transform:scaleX(1.0387)">Caln1</div>
<div class="b" style="left:253px;top:712px;transform:scaleX(1.0873)">calneuron 1; far 3' UTR</div>
<div class="b" style="right:320.5px;top:712px">5</div>
<div class="b" style="right:237.5px;top:712px;transform:scaleX(1.1358);transform-origin:100% 0">131.131513</div>
<div class="b" style="right:186.5px;top:712px;transform:scaleX(1.1349);transform-origin:100% 0">8.255</div>
<div class="b l" style="right:123.5px;top:712px;transform:scaleX(1.1696);transform-origin:100% 0">0.811</div>
<div class="b" style="right:73.5px;top:712px;transform:scaleX(1.1327);transform-origin:100% 0">72</div>
<div class="b" style="left:884px;top:712px;transform:scaleX(1.1708)">0.00e+00</div>
</body></html>
